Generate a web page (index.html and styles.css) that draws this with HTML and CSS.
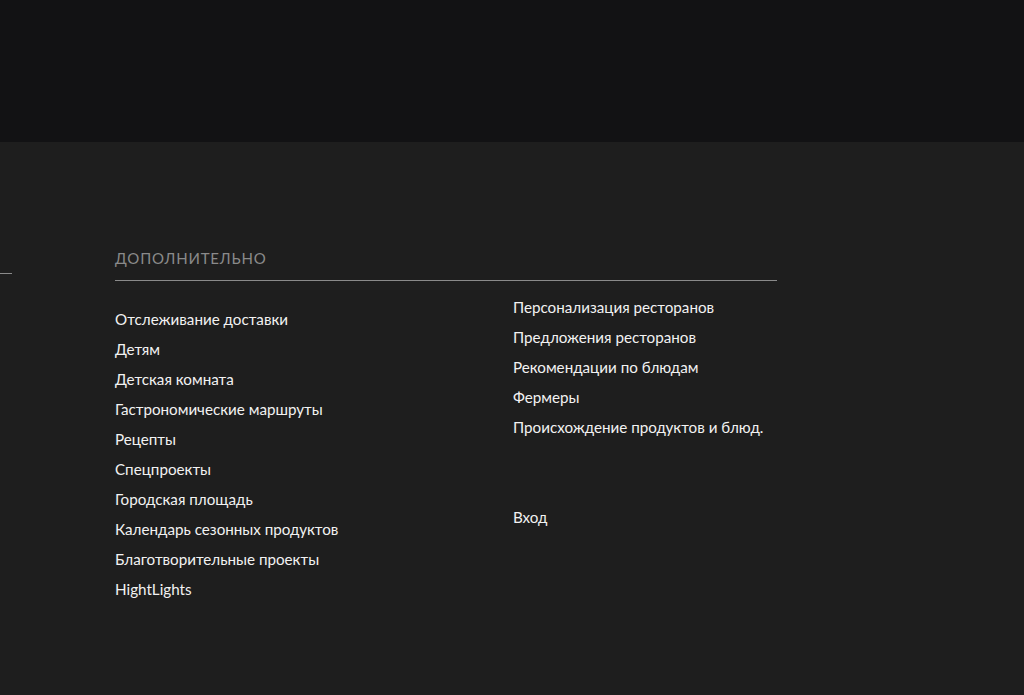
FILE: index.html
```html
<!DOCTYPE html>
<html lang="ru">
<head>
<meta charset="utf-8">
<link rel="stylesheet" href="styles.css">
</head>
<body>
<header class="top"></header>
<footer class="footer">
  <div class="side-line"></div>
  <section class="extra">
    <h2 class="extra-title">Дополнительно</h2>
    <div class="cols">
      <ul class="col col-left">
        <li>Отслеживание доставки</li>
        <li>Детям</li>
        <li>Детская комната</li>
        <li>Гастрономические маршруты</li>
        <li>Рецепты</li>
        <li>Спецпроекты</li>
        <li>Городская площадь</li>
        <li>Календарь сезонных продуктов</li>
        <li>Благотворительные проекты</li>
        <li>HightLights</li>
      </ul>
      <ul class="col col-right">
        <li>Персонализация ресторанов</li>
        <li>Предложения ресторанов</li>
        <li>Рекомендации по блюдам</li>
        <li>Фермеры</li>
        <li>Происхождение продуктов и блюд.</li>
        <li class="gap">Вход</li>
      </ul>
    </div>
  </section>
</footer>
</body>
</html>
```
FILE: styles.css
```css
html, body {
  margin: 0;
  padding: 0;
}
body {
  background: #1e1e1e;
  font-family: "Lato", "Open Sans", sans-serif;
  color: #f2f2f2;
  height: 695px;
  overflow: hidden;
}
.top {
  height: 142px;
  background: #121214;
}
.footer {
  display: flex;
  padding-top: 106px;
}
.side-line {
  width: 12px;
  height: 1px;
  margin-top: 25px;
  margin-right: 103px;
  background: #8a8a8a;
}
.extra {
  width: 662px;
}
.extra-title {
  margin: 0;
  font-weight: 400;
  font-size: 15px;
  line-height: 20px;
  text-transform: uppercase;
  color: #8a8a8a;
  padding-bottom: 12px;
  border-bottom: 1px solid #8a8a8a;
  letter-spacing: 0.8px;
}
.cols {
  display: grid;
  grid-template-columns: 398px 1fr;
}
.col {
  list-style: none;
  margin: 0;
  padding: 0;
  font-size: 15.2px;
  line-height: 30px;
}
.col-left {
  padding-top: 23px;
}
.col-right {
  padding-top: 11px;
}
.gap {
  margin-top: 60px;
}
```
